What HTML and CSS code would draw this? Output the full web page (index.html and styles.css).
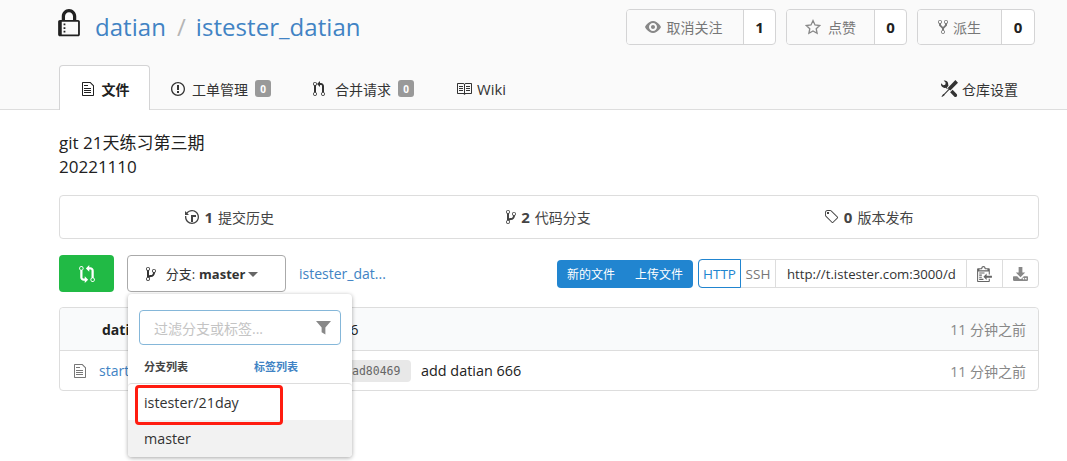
FILE: index.html
```html
<!DOCTYPE html>
<html lang="zh">
<head>
<meta charset="utf-8">
<title>datian / istester_datian</title>
<link rel="stylesheet" href="styles.css">
</head>
<body>
<header class="repo-header">
  <div class="container">
    <div class="title-row">
      <h1 class="repo-title">
        <svg class="lock" viewBox="0 0 12 16"><path d="M4 13H3v-1h1v1zm8-6v7c0 .55-.45 1-1 1H1c-.55 0-1-.45-1-1V7c0-.55.45-1 1-1h1V4c0-2.2 1.8-4 4-4s4 1.8 4 4v2h1c.55 0 1 .45 1 1zM3.8 6h4.41V4c0-1.22-.98-2.2-2.2-2.2-1.22 0-2.2.98-2.2 2.2v2H3.8zM11 7H2v7h9V7zM4 8H3v1h1V8zm0 2H3v1h1v-1z"/></svg>
        <a class="title-link">datian</a><span class="slash">/</span><a class="title-link">istester_datian</a>
      </h1>
      <div class="actions">
        <div class="action action-watch">
          <span class="action-main"><svg class="ic ic-grey" viewBox="0 0 16 16"><path d="M8.06 2C3 2 0 8 0 8s3 6 8.06 6C13 14 16 8 16 8s-3-6-7.94-6zM8 12c-2.2 0-4-1.78-4-4 0-2.2 1.8-4 4-4 2.22 0 4 1.8 4 4 0 2.22-1.78 4-4 4zm2-4c0 1.11-.89 2-2 2-1.11 0-2-.89-2-2 0-1.11.89-2 2-2 1.11 0 2 .89 2 2z"/></svg>取消关注</span>
          <span class="action-count">1</span>
        </div>
        <div class="action action-star">
          <span class="action-main"><svg class="ic ic-star" viewBox="0 0 16 16"><path d="M8 1.6l2 4.3 4.7.6-3.5 3.2.9 4.6L8 11.9l-4.1 2.4.9-4.6L1.300 6.500l4.700-.6z"/></svg>点赞</span>
          <span class="action-count">0</span>
        </div>
        <div class="action action-fork">
          <span class="action-main"><svg class="ic ic-fork" viewBox="0 0 10 16"><path d="M8 1a1.993 1.993 0 0 0-1 3.720V6L5 8 3 6V4.720A1.993 1.993 0 0 0 2 1a1.993 1.993 0 0 0-1 3.720V6.500l3 3v1.780A1.993 1.993 0 0 0 5 15a1.993 1.993 0 0 0 1-3.720V9.500l3-3V4.720A1.993 1.993 0 0 0 8 1zM2 4.200C1.340 4.200.8 3.650.8 3c0-.65.55-1.200 1.200-1.200.65 0 1.200.55 1.200 1.200 0 .65-.55 1.200-1.200 1.200zm3 10c-.66 0-1.200-.55-1.200-1.200 0-.65.55-1.200 1.200-1.200.65 0 1.200.55 1.200 1.200 0 .65-.55 1.200-1.200 1.200zm3-10c-.66 0-1.200-.55-1.200-1.200 0-.65.55-1.200 1.200-1.200.65 0 1.200.55 1.200 1.200 0 .65-.55 1.200-1.200 1.200z"/></svg>派生</span>
          <span class="action-count">0</span>
        </div>
      </div>
    </div>
    <nav class="tabs">
      <a class="tab tab-active"><svg class="ic" viewBox="0 0 12 16"><path d="M6 5H2V4h4v1zM2 8h7V7H2v1zm0 2h7V9H2v1zm0 2h7v-1H2v1zm10-7.500V14c0 .55-.45 1-1 1H1c-.55 0-1-.45-1-1V2c0-.55.45-1 1-1h7.500L12 4.500zM11 5L8 2H1v12h10V5z"/></svg>文件</a>
      <a class="tab"><svg class="ic ic-issue" viewBox="0 0 14 16"><path d="M7 2.300c3.140 0 5.700 2.560 5.700 5.700s-2.560 5.700-5.700 5.700A5.710 5.710 0 0 1 1.300 8c0-3.140 2.560-5.700 5.700-5.700zM7 1C3.140 1 0 4.140 0 8s3.140 7 7 7 7-3.140 7-7-3.140-7-7-7zm1 3H6v5h2V4zm0 6H6v2h2v-2z"/></svg>工单管理<span class="badge">0</span></a>
      <a class="tab tab-pr"><svg class="ic" viewBox="0 0 12 16"><path d="M11 11.280V5c-.03-.78-.34-1.470-.94-2.060C9.460 2.350 8.780 2.030 8 2H7V0L4 3l3 3V4h1c.27.02.48.11.69.31.21.2.3.42.31.69v6.280A1.993 1.993 0 0 0 10 15a1.993 1.993 0 0 0 1-3.720zm-1 2.920c-.66 0-1.200-.55-1.200-1.200 0-.65.55-1.200 1.200-1.200.65 0 1.200.55 1.200 1.200 0 .65-.55 1.200-1.200 1.200zM4 3c0-1.110-.89-2-2-2a1.993 1.993 0 0 0-1 3.720v6.560A1.993 1.993 0 0 0 2 15a1.993 1.993 0 0 0 1-3.720V4.720c.59-.34 1-.98 1-1.720zm-.8 10c0 .66-.55 1.200-1.200 1.200-.65 0-1.200-.55-1.200-1.200 0-.65.55-1.200 1.200-1.200.65 0 1.200.55 1.200 1.200zM2 4.200C1.340 4.200.8 3.650.8 3c0-.65.55-1.200 1.200-1.200.65 0 1.200.55 1.200 1.200 0 .65-.55 1.200-1.200 1.200z"/></svg>合并请求<span class="badge">0</span></a>
      <a class="tab tab-wiki"><svg class="ic ic-book" viewBox="0 0 16 16"><path d="M3 5h4v1H3V5zm0 3h4V7H3v1zm0 2h4V9H3v1zm11-5h-4v1h4V5zm0 2h-4v1h4V7zm0 2h-4v1h4V9zm2-6v9c0 .55-.45 1-1 1H9.500l-1 1-1-1H2c-.55 0-1-.45-1-1V3c0-.55.45-1 1-1h5.500l1 1 1-1H15c.55 0 1 .45 1 1zm-8 .5L7.500 3H2v9h6V3.500zm7-.5H9.500l-.5.5V12h6V3z"/></svg>Wiki</a>
      <a class="tab tab-right"><svg class="ic ic-tools" viewBox="0 0 16 16"><path d="M4.480 7.270c.26.26 1.280 1.330 1.280 1.330l.56-.58-.88-.91 1.690-1.800s-.76-.74-.43-.45c.32-1.190.03-2.510-.87-3.440C4.930.5 3.660.2 2.520.51l1.930 2-.51 1.960-1.890.52-1.930-2C-.19 4.170.1 5.480 1 6.400c.94.98 2.290 1.260 3.480.87zm6.440 1.940l-2.330 2.300 3.840 3.980c.31.33.73.49 1.140.49.41 0 .82-.16 1.140-.49.63-.65.63-1.700 0-2.350l-3.790-3.930zM16 2.530L13.550 0 6.330 7.460l.88.91-4.310 4.460-.99.53-1.390 2.270.35.37 2.200-1.440.51-1.020L7.900 9.080l.88.91L16 2.530z"/></svg>仓库设置</a>
    </nav>
  </div>
</header>

<main class="container">
  <p class="desc">git 21天练习第三期<br>20221110</p>

  <div class="stats">
    <span class="stat"><svg class="ic" viewBox="0 0 14 16"><path d="M8 13H6V6h5v2H8v5zM7 1C4.810 1 2.870 2.020 1.590 3.590L0 2v4h4L2.500 4.500C3.550 3.170 5.170 2.300 7 2.300c3.140 0 5.700 2.560 5.700 5.700s-2.560 5.700-5.700 5.700A5.710 5.710 0 0 1 1.300 8c0-.34.03-.67.09-1H.08C.03 7.330 0 7.660 0 8c0 3.860 3.140 7 7 7s7-3.140 7-7-3.140-7-7-7z"/></svg><b>1</b>提交历史</span>
    <span class="stat"><svg class="ic ic-narrow" viewBox="0 0 10 16"><path d="M10 5c0-1.110-.89-2-2-2a1.993 1.993 0 0 0-1 3.720v.3c-.02.52-.23.98-.63 1.380-.4.4-.86.61-1.380.63-.83.02-1.480.16-2 .45V4.720a1.993 1.993 0 0 0-1-3.720C.88 1 0 1.890 0 3a2 2 0 0 0 1 1.720v6.560c-.59.35-1 .99-1 1.720 0 1.110.89 2 2 2 1.110 0 2-.89 2-2 0-.53-.2-1-.53-1.360.09-.06.48-.41.59-.47.25-.11.56-.17.94-.17 1.050-.05 1.950-.45 2.750-1.250S8.950 7.770 9 6.730h-.02C9.590 6.370 10 5.730 10 5zM2 1.800c.66 0 1.200.55 1.200 1.200 0 .65-.55 1.200-1.200 1.200C1.350 4.200.8 3.650.8 3c0-.65.55-1.200 1.200-1.200zm0 12.410c-.66 0-1.200-.55-1.200-1.200 0-.65.55-1.200 1.200-1.200.65 0 1.200.55 1.200 1.200 0 .65-.55 1.200-1.200 1.200zm6-8c-.66 0-1.200-.55-1.200-1.200 0-.65.55-1.200 1.200-1.200.65 0 1.200.55 1.200 1.200 0 .65-.55 1.200-1.200 1.200z"/></svg><b>2</b>代码分支</span>
    <span class="stat"><svg class="ic" viewBox="0 0 14 16"><path d="M7.730 1.730C7.260 1.260 6.620 1 5.960 1H3.500C2.130 1 1 2.130 1 3.500v2.470c0 .66.27 1.300.73 1.770l6.060 6.060c.39.39 1.020.39 1.410 0l4.590-4.590a.996.996 0 0 0 0-1.410L7.730 1.730zM2.380 7.090c-.31-.3-.47-.7-.47-1.130V3.500c0-.88.72-1.590 1.590-1.590h2.470c.42 0 .83.16 1.130.47l6.140 6.130-4.730 4.730-6.130-6.150zM3.010 3h2v2H3V3h.01z"/></svg><b>0</b>版本发布</span>
  </div>

  <div class="toolbar">
    <a class="btn-compare"><svg class="ic ic-compare" viewBox="0 0 14 16"><path d="M5 12H4c-.27-.02-.48-.11-.69-.31-.21-.2-.3-.42-.31-.69V4.720A1.993 1.993 0 0 0 2 1a1.993 1.993 0 0 0-1 3.720V11c.03.78.34 1.470.94 2.060.6.59 1.280.91 2.060.94h1v2l3-3-3-3v2zM2 1.800c.66 0 1.200.55 1.200 1.200 0 .65-.55 1.200-1.200 1.200C1.350 4.200.8 3.650.8 3c0-.65.55-1.200 1.200-1.200zm11 9.480V5c-.03-.78-.34-1.470-.94-2.060-.6-.59-1.280-.91-2.060-.94H9V0L6 3l3 3V4h1c.27.02.48.11.69.31.21.2.3.42.31.69v6.280A1.993 1.993 0 0 0 12 15a1.993 1.993 0 0 0 1-3.720zm-1 2.920c-.66 0-1.200-.55-1.200-1.200 0-.65.55-1.200 1.200-1.200.65 0 1.200.55 1.200 1.200 0 .65-.55 1.200-1.200 1.200z"/></svg></a>
    <div class="branch-wrap">
      <button class="btn-branch"><svg class="ic ic-narrow" viewBox="0 0 10 16"><path d="M10 5c0-1.110-.89-2-2-2a1.993 1.993 0 0 0-1 3.720v.3c-.02.52-.23.98-.63 1.380-.4.4-.86.61-1.380.63-.83.02-1.480.16-2 .45V4.720a1.993 1.993 0 0 0-1-3.720C.88 1 0 1.890 0 3a2 2 0 0 0 1 1.720v6.560c-.59.35-1 .99-1 1.720 0 1.110.89 2 2 2 1.110 0 2-.89 2-2 0-.53-.2-1-.53-1.360.09-.06.48-.41.59-.47.25-.11.56-.17.94-.17 1.050-.05 1.950-.45 2.750-1.250S8.950 7.770 9 6.730h-.02C9.590 6.370 10 5.730 10 5zM2 1.800c.66 0 1.200.55 1.200 1.200 0 .65-.55 1.200-1.200 1.200C1.350 4.200.8 3.650.8 3c0-.65.55-1.200 1.200-1.200zm0 12.410c-.66 0-1.200-.55-1.200-1.200 0-.65.55-1.200 1.200-1.200.65 0 1.200.55 1.200 1.200 0 .65-.55 1.200-1.200 1.200zm6-8c-.66 0-1.200-.55-1.200-1.200 0-.65.55-1.200 1.200-1.200.65 0 1.200.55 1.200 1.200 0 .65-.55 1.200-1.200 1.200z"/></svg>分支: <b>master</b><span class="caret"></span></button>
      <div class="dropdown">
        <div class="filter">
          <span class="filter-ph">过滤分支或标签...</span>
          <svg class="filter-ic" viewBox="0 0 16 16"><path d="M0 1h16L10 8v7.500L6 13V8z"/></svg>
        </div>
        <div class="dd-tabs"><span class="dd-tab">分支列表</span><span class="dd-tab dd-tab-link">标签列表</span></div>
        <ul class="dd-menu">
          <li class="dd-item">istester/21day</li>
          <li class="dd-item dd-item-hover">master</li>
        </ul>
        <span class="highlight"></span>
      </div>
    </div>
    <a class="crumb">istester_dat...</a>
    <div class="toolbar-right">
      <div class="upload-group"><a class="upload-btn">新的文件</a><a class="upload-btn">上传文件</a></div>
      <div class="clone">
        <span class="clone-proto clone-http">HTTP</span>
        <span class="clone-proto clone-ssh">SSH</span>
        <span class="clone-url">http://t.istester.com:3000/d</span>
        <span class="clone-btn"><svg class="ic ic-clip" viewBox="0 0 14 16"><path d="M2 13h4v1H2v-1zm5-6H2v1h5V7zm2 3V8l-3 3 3 3v-2h5v-2H9zM4.500 9H2v1h2.500V9zM2 12h2.500v-1H2v1zm9 1h1v2c-.02.28-.11.52-.3.7-.19.18-.42.28-.7.3H1c-.55 0-1-.45-1-1V4c0-.55.45-1 1-1h3c0-1.110.89-2 2-2 1.110 0 2 .89 2 2h3c.55 0 1 .45 1 1v5h-1V6H1v9h10v-2zM2 5h8c0-.55-.45-1-1-1H8c-.55 0-1-.45-1-1s-.45-1-1-1-1 .45-1 1-.45 1-1 1H3c-.55 0-1 .45-1 1z"/></svg></span>
        <span class="clone-btn"><svg class="ic ic-dl" viewBox="0 0 16 16"><path d="M6 1h4v6h3L8 12 3 7h3zM1 11h3.500L7 13.500c.6.6 1.400.6 2 0L11.500 11H15c.55 0 1 .45 1 1v3c0 .55-.45 1-1 1H1c-.55 0-1-.45-1-1v-3c0-.55.45-1 1-1zm11 2.500a.8.8 0 1 0 0 .01zm2.500 0a.8.8 0 1 0 0 .01z"/></svg></span>
      </div>
    </div>
  </div>

  <div class="files">
    <div class="file-head">
      <b class="committer">datian</b><span class="head-msg">add datian 666</span><span class="time">11 分钟之前</span>
    </div>
    <div class="file-row">
      <svg class="ic ic-file" viewBox="0 0 12 16"><path d="M6 5H2V4h4v1zM2 8h7V7H2v1zm0 2h7V9H2v1zm0 2h7v-1H2v1zm10-7.500V14c0 .55-.45 1-1 1H1c-.55 0-1-.45-1-1V2c0-.55.45-1 1-1h7.500L12 4.500zM11 5L8 2H1v12h10V5z"/></svg>
      <a class="file-name">start.txt</a>
      <code class="sha">ad80469</code>
      <span class="file-msg">add datian 666</span>
      <span class="time">11 分钟之前</span>
    </div>
  </div>
</main>
</body>
</html>
```

FILE: styles.css
```css
* { box-sizing: border-box; }
html, body { margin: 0; height: 461px; overflow: hidden; }
body {
  background: #fff;
  color: #212121;
  font-family: "Open Sans", "Noto Sans CJK SC", sans-serif;
  font-size: 14px;
}
a { color: #4183c4; text-decoration: none; }
b { font-weight: 700; }
.container { width: 980px; margin-left: 59px; }

.ic { width: 16px; height: 16px; fill: currentColor; flex: none; }
.ic-narrow { width: 10px; }

.repo-header { background: #fafafa; border-bottom: 1px solid #ddd; height: 110px; }
.title-row { display: flex; justify-content: space-between; align-items: flex-start; height: 56px; padding-top: 9px; }
.repo-title { display: flex; align-items: center; margin: 0; height: 36px; font-size: 24px; font-weight: 400; line-height: 36px; }
.lock { width: 22px; height: 29px; fill: #212121; margin: -7px 15px 0 -1px; }
.title-link { color: #4183c4; letter-spacing: .05px; }
.slash { color: #b5b5b5; margin: 0 10px 0 11px; }

.actions { display: flex; gap: 10px; margin-right: 4px; }
.action { display: flex; height: 36px; border: 1px solid #d4d4d5; border-radius: 4px; overflow: hidden; background: #fff; }
.action-main { display: flex; align-items: center; justify-content: center; background: #fafafa; color: #777; border-right: 1px solid #d4d4d5; font-size: 14px; }
.action-count { display: flex; align-items: center; justify-content: center; font-weight: 700; font-size: 15px; color: #212121; }
.action-watch .action-main { width: 117px; gap: 6px; padding-right: 3px; }
.action-watch .action-count { width: 31px; }
.action-star .action-main { width: 88px; gap: 7px; }
.action-star .action-count { width: 31px; }
.action-fork .action-main { width: 84px; gap: 5px; }
.action-fork .action-count { width: 32px; }
.ic-grey { color: #888; }
.ic-star { fill: none; stroke: #888; stroke-width: 1.3; }
.ic-fork { color: #777; width: 10px; }

.tabs { display: flex; height: 54px; padding-top: 0; position: relative; margin-top: -1px; }
.tab { display: flex; align-items: center; height: 45px; margin-top: 10px; padding: 2px 0 0; color: #333; font-size: 14px; }
.tab:nth-child(2) { margin-left: 20px; }
.tab:nth-child(3) { margin-left: 40px; }
.tab:nth-child(4) { margin-left: 42px; }
.tab .ic { margin-right: 6px; }
.tab-pr .ic { margin-right: 8px; }
.tab-wiki { font-size: 14.8px; }
.tab-active {
  width: 91px; justify-content: center; font-weight: 700; color: #212121;
  background: #fff; border: 1px solid #d4d4d5; border-bottom: 0; border-radius: 4px 4px 0 0;
  height: 45px;
}
.tab .ic-book { margin-right: 5px; }
.tab .ic-tools { width: 17px; height: 17px; margin-right: 4px; }
.tab-right { margin-left: auto; margin-right: 21px; }
.badge { display: inline-flex; align-items: center; justify-content: center; width: 16px; height: 17px; margin-left: 7px; background: #999; color: #fff; border-radius: 3px; font-size: 10px; font-weight: 700; }

.desc { margin: 0; padding-top: 21px; font-size: 17px; line-height: 24px; color: #212121; height: 85px; }

.stats { display: grid; grid-template-columns: repeat(3, 1fr); padding: 0 10px 0 9px; height: 44px; border: 1px solid #ddd; border-radius: 4px; align-items: center; }
.stat { display: flex; align-items: center; justify-content: center; color: #444; font-size: 14px; }
.stat .ic { margin-right: 5px; }
.stat b { font-size: 15px; margin-right: 5px; color: #444; }

.toolbar { display: flex; align-items: center; height: 37px; margin-top: 16px; }
.btn-compare { display: flex; align-items: center; justify-content: center; width: 55px; height: 37px; background: #21ba45; border-radius: 4px; color: #fff; }
.ic-compare { width: 16px; height: 18px; }
.branch-wrap { position: relative; margin-left: 13px; }
.btn-branch { display: flex; align-items: center; justify-content: center; width: 159px; height: 37px; padding: 0 9px 0 0; background: #fff; border: 1px solid #aaa; border-radius: 4px; font: inherit; font-size: 13px; color: #333; }
.btn-branch .ic { margin-right: 10px; }
.btn-branch b { margin-left: 4px; }
.caret { margin-left: 3px; margin-top: 2px; border: 5px solid transparent; border-top: 5px solid #666; border-bottom: 0; }

.dropdown {
  position: absolute; z-index: 5; left: 1px; top: 39px; width: 224px; height: 163px;
  background: #fff; border-radius: 4px; box-shadow: 0 1px 4px rgba(0,0,0,.35);
  padding-top: 16px;
}
.filter { display: flex; align-items: center; justify-content: space-between; height: 35px; margin: 0 11px; padding: 0 9px 0 14px; border: 1px solid #85b7d9; border-radius: 4px; }
.filter-ph { color: #c4c4c4; font-size: 14px; }
.filter-ic { width: 15px; height: 15px; fill: #888; }
.dd-tabs { display: flex; padding: 14px 0 0 16px; height: 38px; font-size: 11px; font-weight: 700; color: #444; line-height: 16px; }
.dd-tab { flex: none; width: 110px; }
.dd-tab-link { color: #4183c4; width: 60px; }
.dd-menu { list-style: none; margin: 0; padding: 0; border-top: 1px solid #ddd; border-radius: 4px 4px 0 0; }
.dd-item { height: 36px; padding: 1px 0 0 16px; line-height: 36px; font-size: 14.300px; color: #333; }
.dd-item-hover { height: 37px; background: #f2f2f2; border-radius: 0 0 4px 4px; }
.highlight { position: absolute; left: 7px; top: 91px; width: 148px; height: 40px; border: 3px solid #ff1c10; border-radius: 4px; }

.crumb { margin-left: 13px; font-size: 14px; }
.toolbar-right { display: flex; align-items: center; margin-left: auto; gap: 5px; }
.upload-group { display: flex; height: 28px; background: #2185d0; border-radius: 4px; }
.upload-btn { display: flex; align-items: center; justify-content: center; width: 68px; color: #fff; font-size: 12px; }
.clone { display: flex; align-items: center; height: 29px; border: 1px solid #ddd; border-radius: 4px; width: 341px; }
.clone-proto { display: flex; align-items: center; justify-content: center; height: 29px; font-size: 13.5px; }
.clone-http { width: 43px; margin: 0 0 0 -1px; color: #2185d0; border: 1px solid #2185d0; border-radius: 4px 0 0 4px; }
.clone-ssh { width: 35px; color: #777; border-right: 1px solid #ddd; font-size: 13.5px; height: 27px; }
.clone-url { flex: 1; padding-left: 11px; font-size: 13.2px; color: #333; white-space: nowrap; }
.clone-btn { display: flex; align-items: center; justify-content: center; width: 36px; height: 27px; border-left: 1px solid #ddd; color: #666; }
.ic-clip { width: 15px; height: 17px; }
.ic-dl { width: 15px; height: 15px; color: #888; }

.files { margin-top: 15px; height: 84px; border: 1px solid #ddd; border-radius: 4px; }
.file-head { display: flex; align-items: center; height: 43px; background: #f9fafb; border-bottom: 1px solid #ddd; padding: 0 12px 0 42px; border-radius: 4px 4px 0 0; }
.committer { color: #212121; }
.head-msg { margin-left: 111px; font-size: 14.4px; }
.time { margin-left: auto; color: #888; font-size: 14px; }
.file-row { display: flex; align-items: center; height: 39px; padding: 0 12px 0 12px; }
.ic-file { color: #777; }
.file-name { margin-left: 11px; width: 220px; }
.sha { display: flex; align-items: center; height: 22px; width: 92px; padding-left: 33px; background: #e8e8e8; border-radius: 4px; font-family: "DejaVu Sans Mono", monospace; font-size: 11.5px; color: #666; }
.file-msg { margin-left: 10px; font-size: 14.4px; }
```
